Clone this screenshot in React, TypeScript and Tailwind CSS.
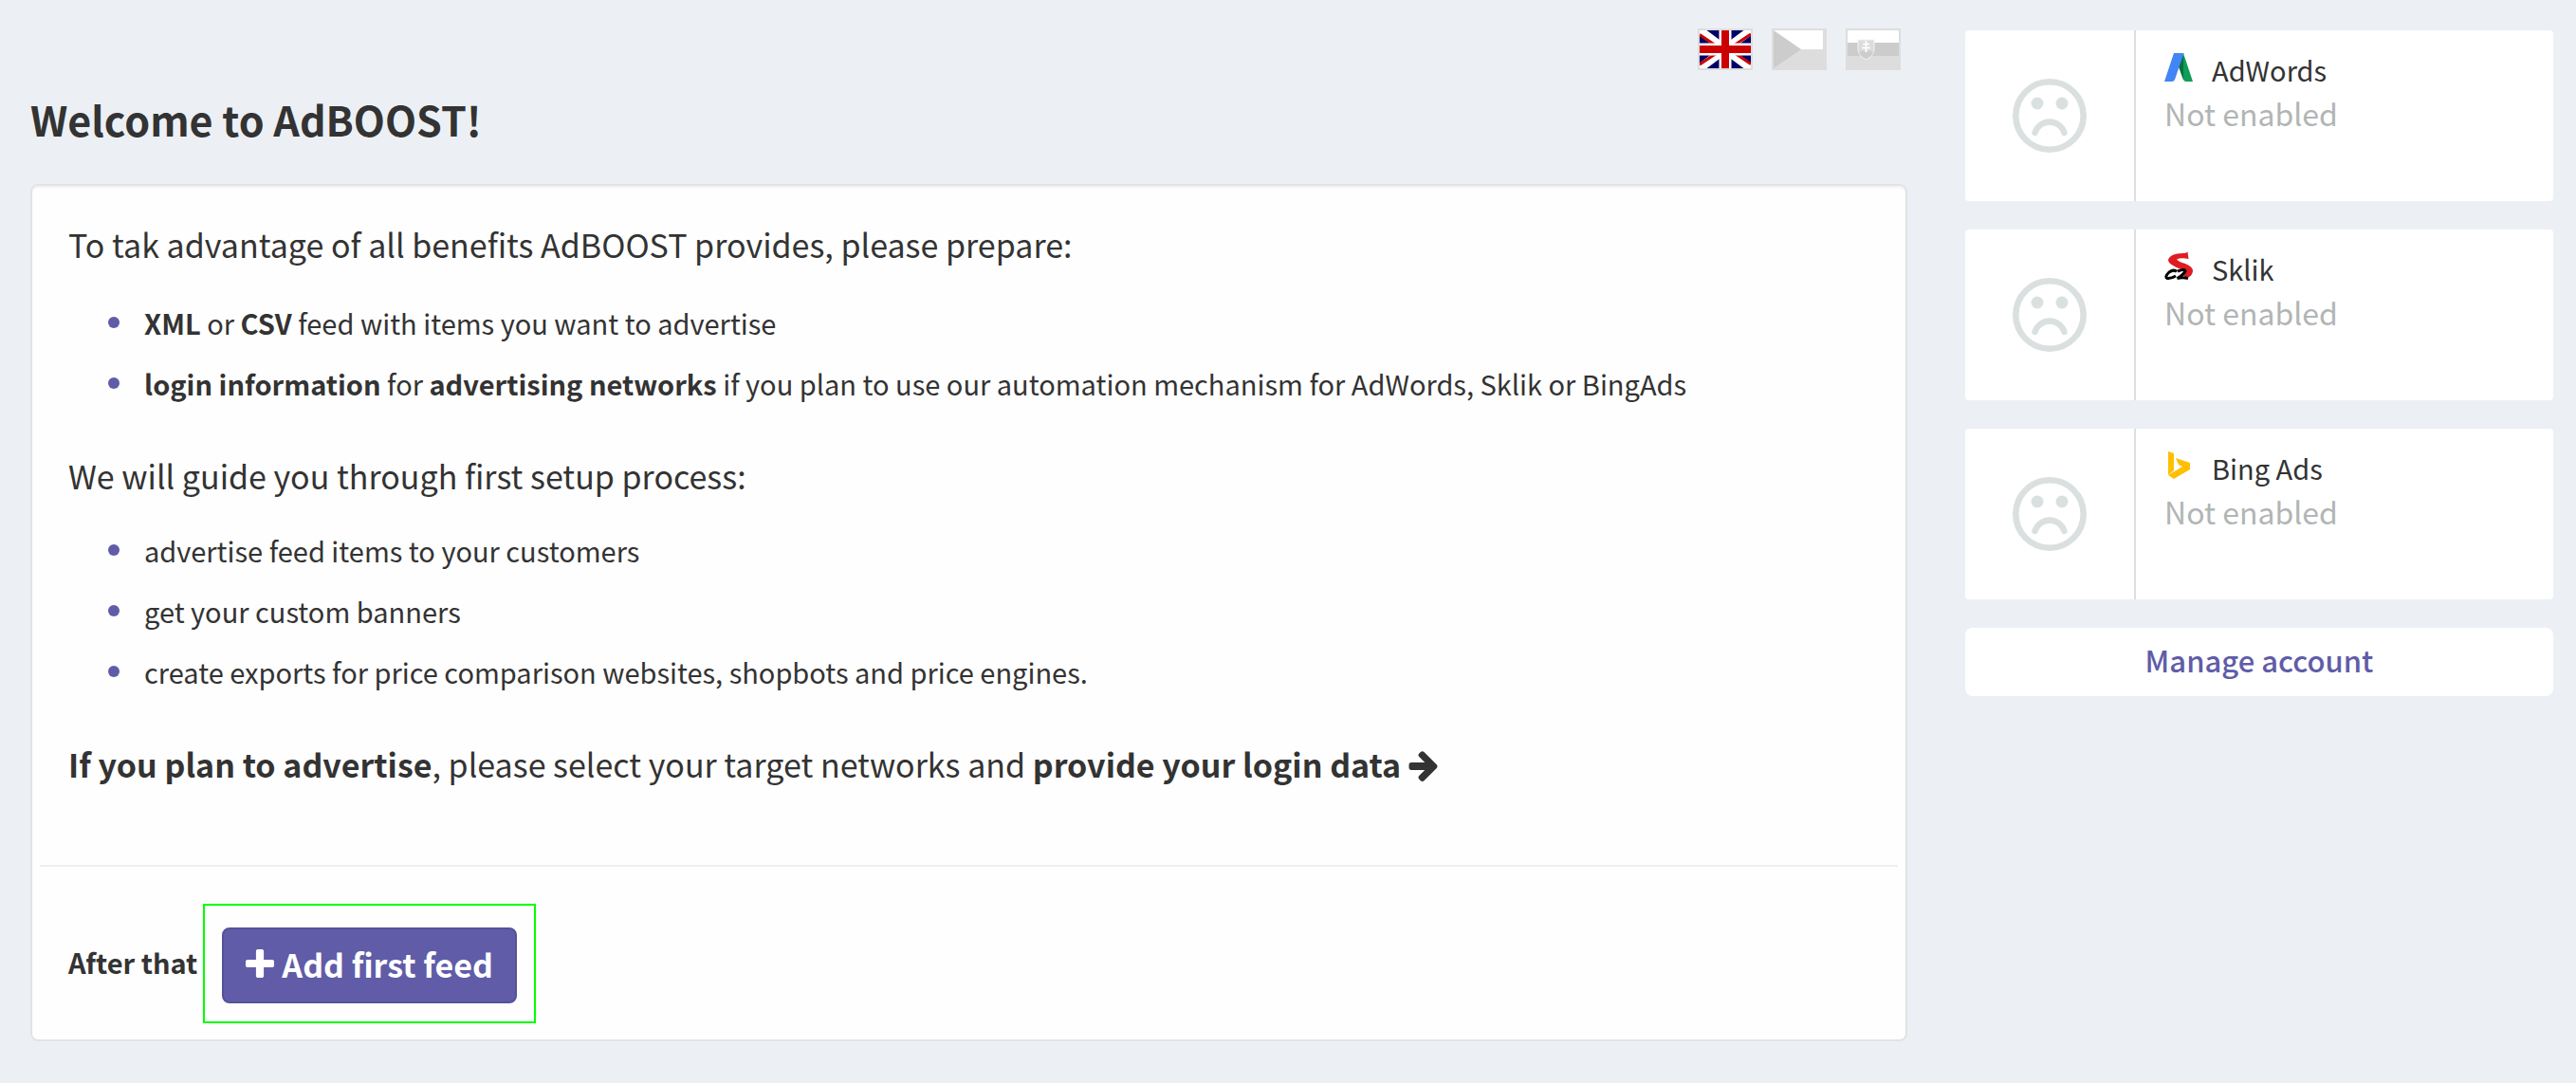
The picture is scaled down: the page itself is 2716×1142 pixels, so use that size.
import type { ReactNode } from "react";

function FlagUk() {
  return (
    <svg viewBox="0 0 54 40" className="block h-10 w-[54px]" aria-hidden="true">
      <rect width="54" height="40" fill="#006" />
      <path d="M0 0L54 40M54 0L0 40" stroke="#fff" strokeWidth="9" />
      <path d="M0 4.500L17 16M54 35.500L37 24M54 4L36 16M0 36L18 24" stroke="#c00" strokeWidth="3" />
      <path d="M27 0V40M0 20H54" stroke="#fff" strokeWidth="13" />
      <path d="M27 0V40M0 20H54" stroke="#c00" strokeWidth="8" />
    </svg>
  );
}

function FlagCz() {
  return (
    <svg viewBox="0 0 54 40" className="block h-10 w-[54px]" aria-hidden="true">
      <rect width="54" height="40" fill="#ddd" />
      <rect width="52" height="20" fill="#fff" />
      <path d="M0 0L29 20L0 40Z" fill="#ccc" />
    </svg>
  );
}

function FlagSk() {
  return (
    <svg viewBox="0 0 54 40" className="block h-10 w-[54px]" aria-hidden="true">
      <rect width="54" height="40" fill="#ddd" />
      <rect width="54" height="13" fill="#fff" />
      <rect y="13" width="54" height="14" fill="#ccc" />
      <path d="M11 10H28V19C28 25 24 29 19.500 31C15 29 11 25 11 19Z" fill="#dcdcdc" stroke="#f2f2f2" />
      <path d="M12 23Q16 20 19.500 23Q23 20 27 23Q25 28 19.500 30Q14 28 12 23Z" fill="#ccc" />
      <path d="M19.500 11V23M16 14.500H23M15 18.500H24" stroke="#fff" strokeWidth="1.600" />
    </svg>
  );
}

function SadFace() {
  return (
    <svg viewBox="0 0 78 78" className="size-[78px]" fill="none" aria-hidden="true">
      <circle cx="39" cy="39" r="35.700" stroke="#dae0e0" strokeWidth="6.600" />
      <circle cx="26" cy="26" r="6.500" fill="#dae0e0" />
      <circle cx="52" cy="26" r="6.500" fill="#dae0e0" />
      <path d="M23.500 57A16.200 16.200 0 0 1 54.500 57" stroke="#dae0e0" strokeWidth="6.400" strokeLinecap="round" />
    </svg>
  );
}

function AdWordsLogo() {
  return (
    <svg viewBox="0 0 32 32" className="size-8" aria-hidden="true">
      <path d="M20 1L30 31H23Q21 31 20 29L15 15Z" fill="#0f9d58" />
      <path d="M20 3V29L15 15Z" fill="#0a6e3d" />
      <path d="M10 1H20.500L11 29Q10 31 8 31H0Z" fill="#4285f4" />
    </svg>
  );
}

function SklikLogo() {
  return (
    <svg viewBox="0 0 32 32" className="size-8" fill="none" aria-hidden="true">
      <path d="M24.500 0.500L25.500 8Q17 6.500 13 8.500Q15 11 22 13Q30 16 30 21Q29 27 23 28L20 26Q24 22 18 19Q4 14 4 9Q6 2 20 2Q23 2 24.500 0.500Z" fill="#e01b22" />
      <path d="M13 21.500Q10 18.500 5 22Q0 27 3 28.500Q7 29 12 26M14 21Q22 18 22 21Q20 25 13.500 28.500Q19 27 25 28.500" stroke="#000" strokeWidth="3" />
    </svg>
  );
}

function BingLogo() {
  return (
    <svg viewBox="0 0 32 32" className="size-8" aria-hidden="true">
      <path d="M4 1L10 3V21L4 26Z" fill="#ffbf00" />
      <path d="M12 8L27 13V20L10 30L4 26L19 17L15 15Z" fill="#ffbf00" />
    </svg>
  );
}

function PlusIcon() {
  return (
    <svg viewBox="0 0 1408 1408" className="size-[30px]" fill="currentColor" aria-hidden="true">
      <path d="M1408 608v192q0 40-28 68t-68 28h-416v416q0 40-28 68t-68 28h-192q-40 0-68-28t-28-68v-416h-416q-40 0-68-28t-28-68v-192q0-40 28-68t68-28h416v-416q0-40 28-68t68-28h192q40 0 68 28t28 68v416h416q40 0 68 28t28 68z" />
    </svg>
  );
}

function ArrowIcon() {
  return (
    <svg viewBox="0 -50 1472 1570" className="inline h-8 w-[31px] align-[-4px]" fill="currentColor" aria-hidden="true">
      <path d="M1472 736q0 54-37 91l-651 651q-39 37-91 37-51 0-90-37l-75-75q-38-38-38-91t38-91l293-293h-704q-52 0-84.500-37.500t-32.500-90.500v-128q0-53 32.500-90.500t84.500-37.500h704l-293-294q-38-36-38-90t38-90l75-75q38-38 90-38 53 0 91 38l651 651q37 35 37 90z" />
    </svg>
  );
}

const languages = [
  { name: "English", flag: <FlagUk /> },
  { name: "Čeština", flag: <FlagCz /> },
  { name: "Slovenčina", flag: <FlagSk /> },
];

const networks = [
  { name: "AdWords", logo: <AdWordsLogo /> },
  { name: "Sklik", logo: <SklikLogo /> },
  { name: "Bing Ads", logo: <BingLogo /> },
];

function BulletList({ items }: { items: ReactNode[] }) {
  return (
    <ul className="pl-[42px] text-[29px] leading-[64px]">
      {items.map((item, i) => (
        <li key={i} className="flex items-center gap-[26px]">
          <span className="size-3 shrink-0 rounded-full bg-[#605ca8]" />
          <span>{item}</span>
        </li>
      ))}
    </ul>
  );
}

export default function App() {
  return (
    <div className="flex min-h-screen items-start gap-[61px] bg-[#ecf0f5] pt-[30px] pr-6 pb-10 pl-8 font-['Noto_Sans_CJK_SC','Noto_Sans',sans-serif] text-[#333]">
      <main className="min-w-0 flex-1">
        <div className="flex justify-end gap-5 pr-[7px]">
          {languages.map((l) => (
            <button key={l.name} type="button" aria-label={l.name} className="border-2 border-[#ddd]">
              {l.flag}
            </button>
          ))}
        </div>
        <h1 className="mt-5 text-[43px] leading-[62px] font-bold">Welcome to AdBOOST!</h1>
        <section className="mt-[38px] rounded-lg border-2 border-[#e3e3e3] bg-[#fefefe] px-2 shadow-[inset_0_2px_2px_rgba(0,0,0,0.05)]">
          <div className="px-[30px] pt-[34px] pb-[78px] text-[34px] leading-[56px]">
            <p className="mb-[22px]">To tak advantage of all benefits AdBOOST provides, please prepare:</p>
            <BulletList
              items={[
                <><b>XML</b> or <b>CSV</b> feed with items you want to advertise</>,
                <><b>login information</b> for <b>advertising networks</b> if you plan to use our automation mechanism for AdWords, Sklik or BingAds</>,
              ]}
            />
            <p className="mt-[38px] mb-[18px]">We will guide you through first setup process:</p>
            <BulletList
              items={[
                "advertise feed items to your customers",
                "get your custom banners",
                "create exports for price comparison websites, shopbots and price engines.",
              ]}
            />
            <p className="mt-[38px]">
              <b>If you plan to advertise</b>, please select your target networks and{" "}
              <b>provide your login data <ArrowIcon /></b>
            </p>
          </div>
          <div className="flex items-center gap-1.5 border-t-2 border-[#eee] px-[30px] pt-[39px] pb-[17px]">
            <b className="pb-1 text-[29px] leading-10">After that</b>
            <div className="border-2 border-[#0f0] px-[18px] pt-[23px] pb-[19px]">
              <button type="button" className="flex h-20 items-center gap-2 rounded-lg border-2 border-[#555299] bg-[#605ca8] px-[23px] pb-1 text-[34px] font-bold text-white">
                <PlusIcon />
                Add first feed
              </button>
            </div>
          </div>
        </section>
      </main>
      <aside className="flex w-[620px] flex-col gap-[30px] pt-0.5">
        {networks.map((n) => (
          <article key={n.name} className="flex h-[180px] rounded bg-white">
            <div className="flex w-[180px] shrink-0 items-center justify-center border-r-2 border-[#dae0e0]">
              <SadFace />
            </div>
            <div className="px-[30px] pt-5">
              <h2 className="flex items-center gap-[18px] text-[29px] leading-[42px]">
                <span className="pb-1">{n.logo}</span>
                {n.name}
              </h2>
              <p className="text-[32px] leading-[50px] text-[#b1b5b5]">Not enabled</p>
            </div>
          </article>
        ))}
        <button type="button" className="h-[72px] rounded-lg bg-white pb-1 text-[31px] font-medium text-[#605ca8]">
          Manage account
        </button>
      </aside>
    </div>
  );
}
